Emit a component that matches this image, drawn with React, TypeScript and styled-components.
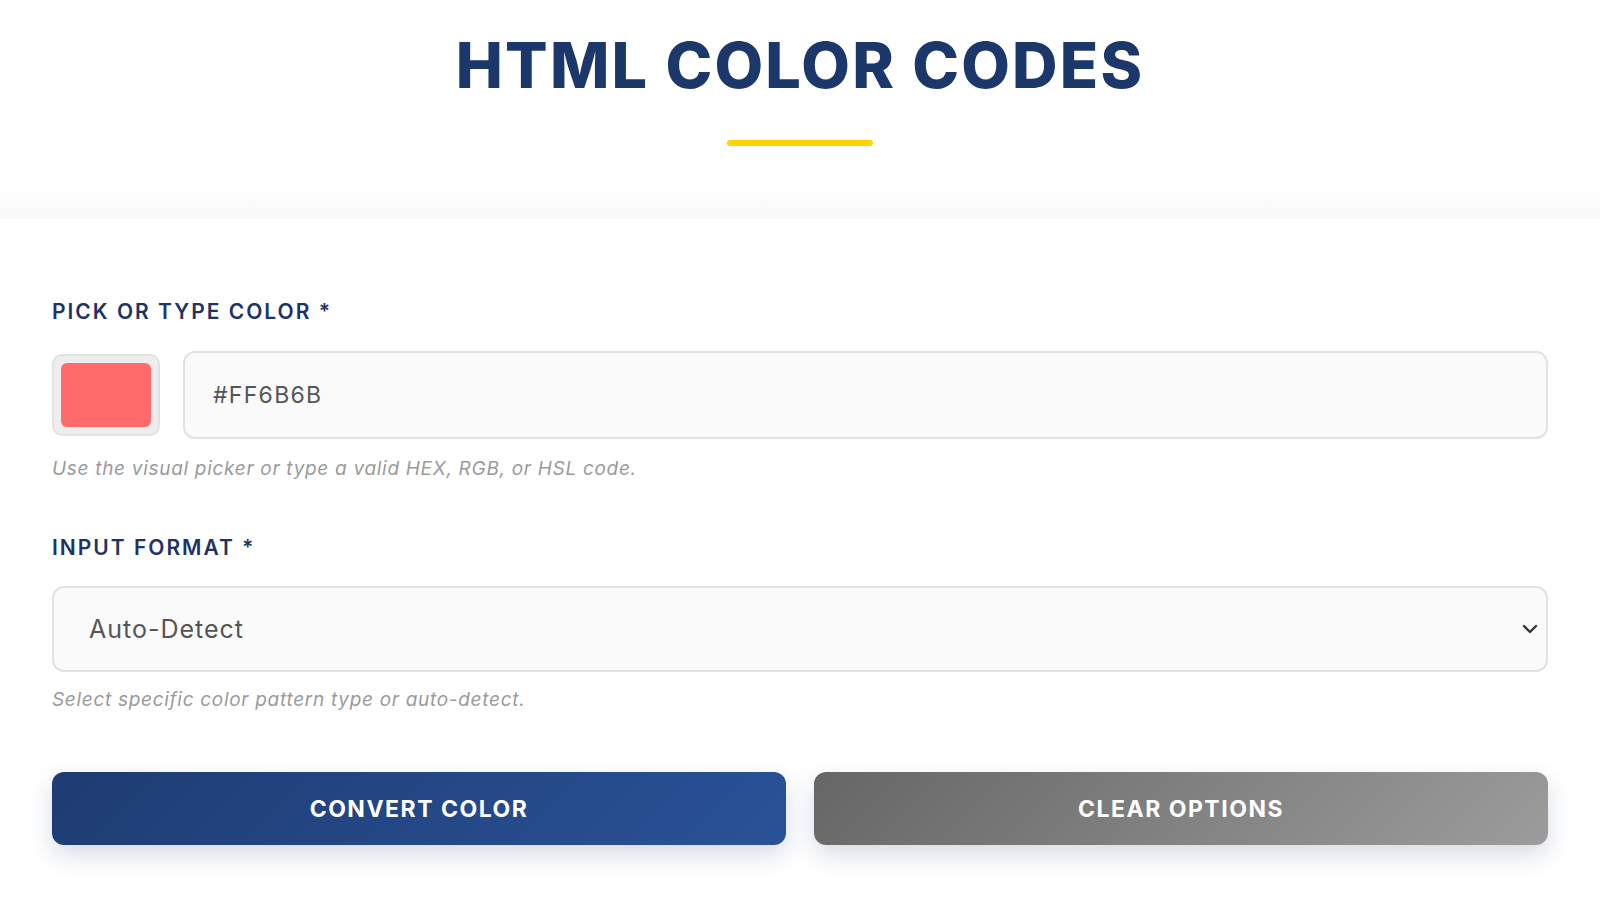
import React from "react";
import styled, { createGlobalStyle } from "styled-components";

const GlobalStyle = createGlobalStyle`
  * { box-sizing: border-box; }
  html, body { margin: 0; padding: 0; background: #ffffff; }
  body { font-family: Inter, "Noto Sans", Arial, sans-serif; }
`;

const Page = styled.div`
  width: 100%;
  min-height: 900px;
  background: #ffffff;
`;

const Header = styled.header`
  height: 219px;
  display: flex;
  flex-direction: column;
  align-items: center;
  padding-top: 34px;
  background: linear-gradient(180deg, #ffffff 0px, #ffffff 186px, #f8f8f8 219px);
`;

const Title = styled.h1`
  margin: 0;
  font-family: Inter, sans-serif;
  font-weight: 800;
  font-size: 63px;
  line-height: 1;
  letter-spacing: 2.2px;
  color: #1c386b;
`;

const Accent = styled.div`
  width: 146px;
  height: 6px;
  margin-top: 43px;
  border-radius: 3px;
  background: #ffd200;
`;

const Card = styled.main`
  padding: 82px 52px 40px;
  display: flex;
  flex-direction: column;
`;

const Label = styled.label<{ $gap: number }>`
  display: block;
  font-family: Inter, sans-serif;
  font-weight: 600;
  font-size: 21px;
  line-height: 1;
  letter-spacing: 2px;
  color: #1e3366;
  margin-bottom: ${(p) => p.$gap}px;
`;

const ColorRow = styled.div`
  display: flex;
  align-items: center;
  gap: 23px;
  height: 88px;
`;

const Swatch = styled.div`
  width: 108px;
  height: 82px;
  flex: 0 0 auto;
  padding: 7px;
  border: 2px solid #e2e2e2;
  border-radius: 10px;
  background: #ededed;
`;

const SwatchFill = styled.div<{ $color: string }>`
  width: 100%;
  height: 100%;
  border-radius: 6px;
  background: ${(p) => p.$color};
`;

const TextField = styled.input`
  flex: 1;
  height: 88px;
  border: 2px solid #e2e2e2;
  border-radius: 12px;
  background: #fafafa;
  padding: 0 28px;
  font-family: Inter, sans-serif;
  font-size: 23px;
  letter-spacing: 1.3px;
  color: #555555;
  outline: none;
`;

const Hint = styled.p<{ $top: number }>`
  margin: ${(p) => p.$top}px 0 0;
  font-family: Inter, sans-serif;
  font-style: italic;
  font-size: 19px;
  line-height: 1;
  letter-spacing: 0.7px;
  color: #9a9a9a;
`;

const FieldGroup = styled.div<{ $top: number }>`
  margin-top: ${(p) => p.$top}px;
`;

const SelectWrap = styled.div`
  position: relative;
  height: 86px;
`;

const Select = styled.select`
  appearance: none;
  -webkit-appearance: none;
  width: 100%;
  height: 100%;
  border: 2px solid #e2e2e2;
  border-radius: 12px;
  background: #fafafa;
  padding: 0 60px 0 35px;
  font-family: Inter, sans-serif;
  font-size: 25px;
  letter-spacing: 1px;
  color: #555555;
  outline: none;
`;

const Chevron = styled.svg`
  position: absolute;
  right: 10px;
  top: 50%;
  width: 16px;
  height: 10px;
  transform: translateY(-50%);
  pointer-events: none;
`;

const Actions = styled.div`
  display: grid;
  grid-template-columns: 1fr 1fr;
  gap: 28px;
  margin-top: 63px;
`;

const Button = styled.button<{ $variant: "primary" | "secondary" }>`
  height: 73px;
  border: none;
  border-radius: 12px;
  background: ${(p) =>
    p.$variant === "primary"
      ? "linear-gradient(135deg, #1e3c72 0%, #2a5298 100%)"
      : "linear-gradient(135deg, #666666 0%, #9c9c9c 100%)"};
  box-shadow: 0 10px 24px rgba(30, 60, 114, 0.18);
  color: #ffffff;
  font-family: Inter, sans-serif;
  font-weight: 700;
  font-size: 23px;
  letter-spacing: 1.5px;
  text-transform: uppercase;
  cursor: pointer;
`;

export default function App() {
  return (
    <Page>
      <GlobalStyle />
      <Header>
        <Title>HTML COLOR CODES</Title>
        <Accent />
      </Header>
      <Card>
        <Label $gap={29}>PICK OR TYPE COLOR *</Label>
        <ColorRow>
          <Swatch>
            <SwatchFill $color="#FF6B6B" />
          </Swatch>
          <TextField defaultValue="#FF6B6B" />
        </ColorRow>
        <Hint $top={20}>Use the visual picker or type a valid HEX, RGB, or HSL code.</Hint>
        <FieldGroup $top={59}>
          <Label $gap={28}>INPUT FORMAT *</Label>
          <SelectWrap>
            <Select defaultValue="auto">
              <option value="auto">Auto-Detect</option>
              <option value="hex">HEX</option>
              <option value="rgb">RGB</option>
              <option value="hsl">HSL</option>
            </Select>
            <Chevron viewBox="0 0 16 10" fill="none">
              <path d="M2 2 L8 8 L14 2" stroke="#333" strokeWidth="2.4" strokeLinecap="round" strokeLinejoin="round" />
            </Chevron>
          </SelectWrap>
        </FieldGroup>
        <Hint $top={18}>Select specific color pattern type or auto-detect.</Hint>
        <Actions>
          <Button $variant="primary">Convert Color</Button>
          <Button $variant="secondary">Clear Options</Button>
        </Actions>
      </Card>
    </Page>
  );
}
